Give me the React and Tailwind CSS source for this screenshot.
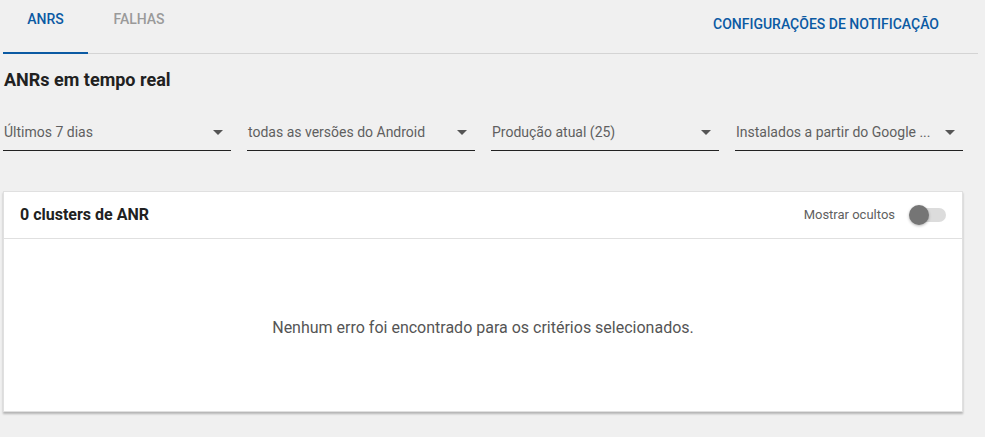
import { useState } from 'react'

const filters = [
  'Últimos 7 dias',
  'todas as versões do Android',
  'Produção atual (25)',
  'Instalados a partir do Google ...',
]

function Select({ label }) {
  return (
    <div className="w-[228px] h-[31px] flex items-center border-b border-[#222] pr-[8px] pb-[6px]">
      <span className="flex-1 min-w-0 whitespace-nowrap text-[14px] text-[#5f5f5f] pl-[1px]">{label}</span>
      <span className="w-0 h-0 border-l-[5px] border-r-[5px] border-t-[5px] border-l-transparent border-r-transparent border-t-[#555] ml-2" />
    </div>
  )
}

export default function App() {
  const [tab, setTab] = useState('anrs')
  const [hidden, setHidden] = useState(false)

  return (
    <div className="w-[985px] h-[437px] bg-[#f0f0f0] overflow-hidden font-['Roboto',sans-serif]">
      <div className="w-[975px] ml-[3px] flex items-stretch h-[54px] border-b border-[#d4d4d4]">
        <button
          onClick={() => setTab('anrs')}
          className={`w-[85px] text-[14px] font-medium pb-[14px] border-b-2 -mb-px ${tab === 'anrs' ? 'text-[#0b5aa3] border-[#0b5aa3]' : 'text-[#9a9a9a] border-transparent'}`}
        >
          ANRS
        </button>
        <button
          onClick={() => setTab('falhas')}
          className={`w-[102px] text-[14px] font-medium pb-[14px] border-b-2 -mb-px ${tab === 'falhas' ? 'text-[#0b5aa3] border-[#0b5aa3]' : 'text-[#9a9a9a] border-transparent'}`}
        >
          FALHAS
        </button>
        <div className="flex-1" />
        <button className="text-[14px] font-medium text-[#0b5aa3] pr-[39px] pb-[5px]">
          CONFIGURAÇÕES DE NOTIFICAÇÃO
        </button>
      </div>

      <h1 className="ml-[4px] mt-[14px] text-[18px] font-bold text-[#212121] leading-[24px]">ANRs em tempo real</h1>

      <div className="ml-[3px] mt-[28px] flex gap-[16px]">
        {filters.map(f => <Select key={f} label={f} />)}
      </div>

      <div className="ml-[3px] mt-[40px] w-[960px] bg-white border border-[#e0e0e0] shadow-[0_2px_2px_rgba(0,0,0,0.25)]">
        <div className="h-[47px] flex items-center px-[16px] border-b border-[#e0e0e0]">
          <span className="text-[16px] font-bold text-[#212121] flex-1">0 clusters de ANR</span>
          <span className="text-[13px] text-[#5f5f5f] mr-[14px]">Mostrar ocultos</span>
          <button
            onClick={() => setHidden(h => !h)}
            className="relative w-[37px] h-[20px] flex items-center"
          >
            <span className="absolute left-[3px] right-0 h-[14px] rounded-full bg-[#dcdcdc]" />
            <span className={`absolute top-0 w-[20px] h-[20px] rounded-full shadow-[0_1px_3px_rgba(0,0,0,0.3)] ${hidden ? 'left-[17px] bg-[#0b5aa3]' : 'left-0 bg-[#757575]'}`} />
          </button>
        </div>
        <div className="h-[172px] pt-[6px] flex items-center justify-center">
          <p className="text-[16px] text-[#555]">Nenhum erro foi encontrado para os critérios selecionados.</p>
        </div>
      </div>
    </div>
  )
}
